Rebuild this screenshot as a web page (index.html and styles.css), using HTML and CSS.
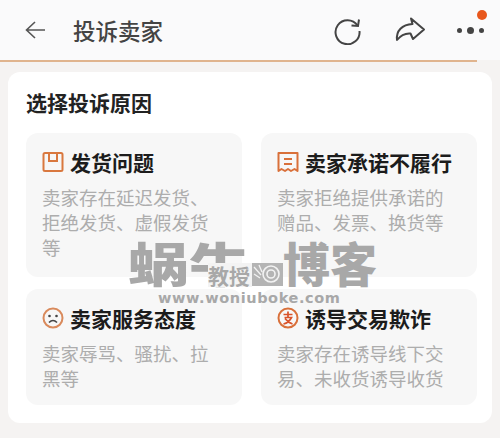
FILE: index.html
```html
<!DOCTYPE html>
<html lang="zh-CN">
<head>
    <meta charset="UTF-8">
    <meta name="viewport" content="width=device-width, initial-scale=1.0">
    <title>投诉卖家</title>
    <link rel="stylesheet" href="styles.css">
</head>
<body>
    <header class="topbar">
        <svg class="back" width="24" height="20" viewBox="0 0 24 20"><path d="M11 2 L2.500 10 L11 18 M3 10 H21" fill="none" stroke="#555" stroke-width="1.600"/></svg>
        <h1 class="page-title">投诉卖家</h1>
        <div class="actions">
            <svg width="30" height="30" viewBox="0 0 30 30"><path d="M24.500 10.500 A12 12 0 1 0 26.500 16" fill="none" stroke="#444" stroke-width="2"/><path d="M18.500 10.500 L25 11 L26 4.500" fill="none" stroke="#444" stroke-width="2"/></svg>
            <svg width="32" height="28" viewBox="0 0 32 28"><path d="M17 2.500 L30 13.500 L19 23 L16.500 17.500 C11 17 7 19 3 24 C2 15 8 8.500 18.500 8 Z" fill="none" stroke="#444" stroke-width="2" stroke-linejoin="round"/></svg>
            <div class="more">
                <span class="more-dot"></span>
                <span class="more-dot big"></span>
                <span class="more-dot"></span>
                <span class="badge"></span>
            </div>
        </div>
    </header>

    <main class="panel">
        <h2 class="panel-title">选择投诉原因</h2>
        <div class="grid">
            <section class="card">
                <div class="card-head">
                    <svg width="22" height="22" viewBox="0 0 22 22"><rect x="1.500" y="2" width="19" height="18" rx="1.500" fill="none" stroke="#d9783f" stroke-width="2"/><path d="M7 2 V10 H15 V2" fill="none" stroke="#d9783f" stroke-width="2"/></svg>
                    <h3 class="card-title">发货问题</h3>
                </div>
                <p class="card-text">卖家存在延迟发货、拒绝发货、虚假发货等</p>
            </section>
            <section class="card">
                <div class="card-head">
                    <svg width="22" height="22" viewBox="0 0 22 22"><path d="M1.500 2 H20.500 V20 L17.500 18 L14 20 L11 18 L8 20 L4.500 18 L1.500 20 Z" fill="none" stroke="#d9703a" stroke-width="2" stroke-linejoin="round"/><path d="M7 8 H15 M7 13 H15" stroke="#d9703a" stroke-width="2"/></svg>
                    <h3 class="card-title">卖家承诺不履行</h3>
                </div>
                <p class="card-text">卖家拒绝提供承诺的赠品、发票、换货等</p>
            </section>
            <section class="card">
                <div class="card-head">
                    <svg width="22" height="22" viewBox="0 0 22 22"><circle cx="11" cy="11" r="9.500" fill="none" stroke="#d98a5c" stroke-width="2"/><circle cx="7.500" cy="9" r="1.300" fill="#444"/><circle cx="14.500" cy="9" r="1.300" fill="#444"/><path d="M7 15.500 Q11 11.500 15 15.500" fill="none" stroke="#444" stroke-width="1.600"/></svg>
                    <h3 class="card-title">卖家服务态度</h3>
                </div>
                <p class="card-text">卖家辱骂、骚扰、拉黑等</p>
            </section>
            <section class="card">
                <div class="card-head">
                    <svg width="22" height="22" viewBox="0 0 22 22"><circle cx="11" cy="11" r="9.500" fill="none" stroke="#d9703a" stroke-width="2"/><path d="M6.500 7.500 H15.500 M11 4.500 V10 M7.500 10.500 H14.500 Q12 15.500 6.500 17 M8 11.500 Q11 15.500 15.500 17" fill="none" stroke="#d9532a" stroke-width="1.700"/></svg>
                    <h3 class="card-title">诱导交易欺诈</h3>
                </div>
                <p class="card-text">卖家存在诱导线下交易、未收货诱导收货</p>
            </section>
        </div>
    </main>

    <div class="watermark">
        <div class="wm-row">
            <span class="wm-big wm-wide">蜗牛</span>
            <span class="wm-small">教授</span>
            <svg class="wm-snail" width="31" height="23" viewBox="0 0 31 23"><rect width="31" height="23" fill="#b4b4b4"/><circle cx="19" cy="11" r="8" fill="none" stroke="#f2f2f2" stroke-width="1.600"/><circle cx="19" cy="11" r="4" fill="none" stroke="#f2f2f2" stroke-width="1.600"/><path d="M2 4 L9 12 M7 2 L10 9 M2 11 L8 15" stroke="#f2f2f2" stroke-width="1.300"/></svg>
            <span class="wm-big">博客</span>
        </div>
        <div class="wm-url">www.woniuboke.com</div>
    </div>
</body>
</html>
```

FILE: styles.css
```css
* {
    box-sizing: border-box;
}
body {
    width: 500px;
    height: 438px;
    margin: 0;
    overflow: hidden;
    position: relative;
    background-color: #f5f3f2;
    font-family: "Noto Sans CJK SC", "Liberation Sans", sans-serif;
}
.topbar {
    display: flex;
    align-items: center;
    height: 62px;
    padding: 0 16px 0 24px;
    background-color: #fafafb;
    border-bottom: 2px solid;
    border-image: linear-gradient(to right, #e0b48e 95.200%, #f5f3f2 95.200%) 1;
}
.page-title {
    margin: 0 0 0 25px;
    font-size: 22.500px;
    font-weight: 500;
    line-height: 30px;
    color: #444;
}
.back {
    flex: none;
}
.actions {
    display: flex;
    align-items: center;
    gap: 31px;
    margin-left: auto;
}
.more {
    position: relative;
    display: flex;
    align-items: center;
    gap: 5px;
}
.more-dot {
    width: 5px;
    height: 5px;
    border-radius: 50%;
    background-color: #444;
}
.more-dot.big {
    width: 7px;
    height: 7px;
}
.badge {
    position: absolute;
    top: -17px;
    right: -3px;
    width: 10px;
    height: 10px;
    border-radius: 50%;
    background-color: #e8571c;
}
.panel {
    margin: 10px 8px 0;
    height: 351px;
    padding: 15px 15px 0 18px;
    background-color: #fff;
    border-radius: 12px;
}
.panel-title {
    margin: 0 0 16px;
    font-size: 21px;
    font-weight: 700;
    line-height: 30px;
    color: #222;
}
.grid {
    display: grid;
    grid-template-columns: 216px 216px;
    grid-template-rows: 144px 116px;
    gap: 12px 19px;
}
.card {
    padding: 15px 16px 0;
    background-color: #f7f7f7;
    border-radius: 12px;
}
.card-head {
    display: flex;
    align-items: center;
    gap: 6px;
    height: 28px;
}
.card-head svg {
    flex: none;
}
.card-title {
    margin: 0;
    font-size: 21px;
    font-weight: 700;
    line-height: 28px;
    color: #1c1c1c;
}
.card-text {
    margin: 9px 0 0;
    font-size: 18.500px;
    line-height: 25px;
    color: #adadad;
}
.watermark {
    position: absolute;
    left: 128px;
    top: 236px;
    width: 250px;
    color: #a8a8a8;
}
.wm-row {
    display: flex;
    align-items: flex-end;
    height: 52px;
}
.wm-big {
    font-size: 47px;
    font-weight: 900;
    line-height: 52px;
    white-space: nowrap;
}
.wm-wide {
    flex: none;
    width: 80px;
    transform: scaleX(1.300);
    transform-origin: left center;
}
.wm-small {
    flex: none;
    position: relative;
    width: 44px;
    margin-bottom: 1px;
    background-color: #f3f3f3;
    font-size: 21px;
    font-weight: 700;
    line-height: 24px;
    white-space: nowrap;
}
.wm-snail {
    flex: none;
    margin-bottom: 2px;
}
.wm-url {
    margin: 2px 0 0 30px;
    font-family: "DejaVu Sans", sans-serif;
    font-size: 14.500px;
    font-weight: 700;
    line-height: 16px;
    letter-spacing: 0.600px;
    white-space: nowrap;
}
```
